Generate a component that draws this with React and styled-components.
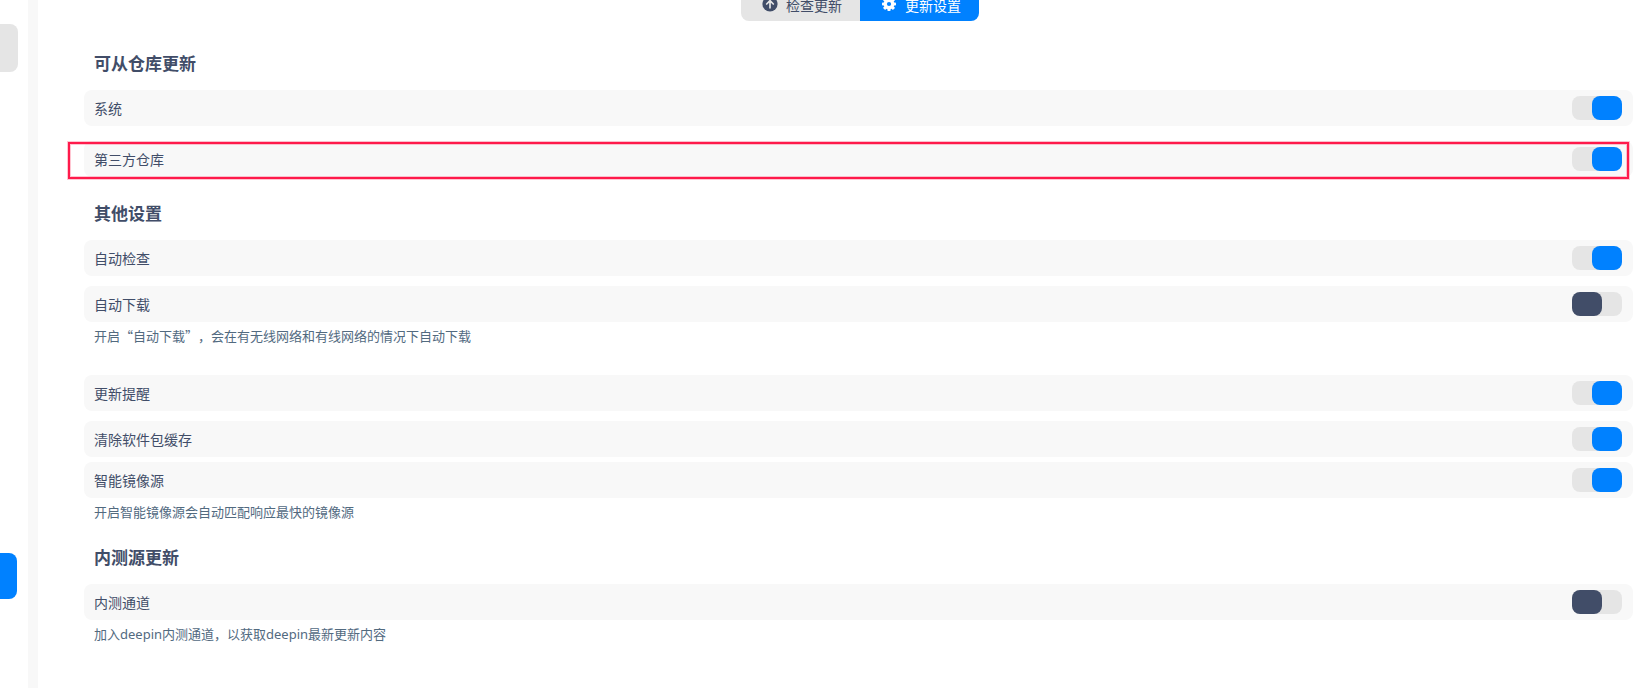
import React, { useState } from 'react';
import styled, { createGlobalStyle, css, ThemeProvider } from 'styled-components';

const theme = {
  primary: '#0081ff',
  dark: '#414d68',
  hint: '#526a7f',
  row: '#f8f8f8',
  grey: '#e5e5e5',
  mark: '#ff1a4b',
  markSoft: 'rgba(255, 26, 75, 0.25)',
  fontSize: {
    s: '13px',
    m: '14px',
    l: '17px',
  },
};

const GlobalStyle = createGlobalStyle`
  *, *::before, *::after {
    box-sizing: border-box;
  }

  body {
    margin: 0;
    background-color: white;
    font-family: 'Noto Sans CJK SC', 'Noto Sans', sans-serif;
    text-spacing-trim: space-all;
    overflow: hidden;
  }
`;

const StyledWrapper = styled.div`
  display: flex;
  min-height: 100vh;
  color: ${({ theme }) => theme.dark};
`;

const Sidebar = styled.nav`
  flex: 0 0 38px;
  display: flex;
  flex-direction: column;
  justify-content: space-between;
  align-items: flex-start;
  padding: 24px 0 89px;
  border-right: 10px solid ${({ theme }) => theme.row};
`;

const SidebarButton = styled.button`
  width: ${({ $active }) => ($active ? '17px' : '18px')};
  height: ${({ $active }) => ($active ? '46px' : '48px')};
  padding: 0;
  border: none;
  border-radius: 0 8px 8px 0;
  background-color: ${({ $active, theme }) => ($active ? theme.primary : theme.grey)};
`;

const Main = styled.main`
  flex: 1;
  min-width: 0;
  padding-left: 46px;
`;

/* the tab bar is scrolled partly out of the window */
const TabsWrapper = styled.div`
  display: flex;
  justify-content: center;
  margin: -15px 0 31px;
  padding-left: 3px;
`;

const Tabs = styled.div`
  display: flex;
  width: 238px;
  height: 36px;
  border-radius: 8px;
  overflow: hidden;
`;

const Tab = styled.button`
  flex: 1;
  display: flex;
  align-items: center;
  gap: 8px;
  padding: 4px 0 0 21px;
  border: none;
  font-family: inherit;
  font-size: ${({ theme }) => theme.fontSize.m};
  line-height: 20px;
  color: ${({ $active, theme }) => ($active ? 'white' : theme.dark)};
  background-color: ${({ $active, theme }) => ($active ? theme.primary : theme.grey)};
`;

const Icon = styled.svg`
  width: 16px;
  height: 16px;
  margin-bottom: 2px;
`;

const Section = styled.section`
  & + & {
    margin-top: 25px;
  }
`;

const Heading = styled.h2`
  margin: 0 0 16px;
  padding-left: 10px;
  font-size: ${({ theme }) => theme.fontSize.l};
  font-weight: 700;
  line-height: 22px;
`;

const Item = styled.div`
  position: relative;
  margin-top: ${({ $gap }) => $gap || 0}px;

  ${({ $marked }) =>
    $marked &&
    css`
      &::after {
        content: '';
        position: absolute;
        inset: 1px 4px -2px -16px;
        border: 2px solid ${({ theme }) => theme.mark};
        box-shadow: 0 0 0 1px ${({ theme }) => theme.markSoft},
          inset 0 0 0 1px ${({ theme }) => theme.markSoft};
        pointer-events: none;
      }
    `}
`;

const Row = styled.label`
  display: flex;
  justify-content: space-between;
  align-items: center;
  height: 36px;
  padding: 0 11px 0 10px;
  border-radius: 8px;
  font-size: ${({ theme }) => theme.fontSize.m};
  line-height: 20px;
  background-color: ${({ theme }) => theme.row};
`;

const Switch = styled.input`
  appearance: none;
  display: flex;
  width: 50px;
  height: 24px;
  margin: 0;
  border-radius: 8px;
  background-color: ${({ theme }) => theme.grey};

  &::before {
    content: '';
    width: 30px;
    height: 24px;
    border-radius: 8px;
    background-color: ${({ theme }) => theme.dark};
  }

  &:checked {
    justify-content: flex-end;
  }

  &:checked::before {
    background-color: ${({ theme }) => theme.primary};
  }
`;

const Hint = styled.p`
  margin: 5px 0 0;
  padding-left: 10px;
  font-family: ${({ $latin }) => $latin && "'Noto Sans', 'Noto Sans CJK SC', sans-serif"};
  font-size: ${({ theme }) => theme.fontSize.s};
  line-height: 18px;
  color: ${({ theme }) => theme.hint};
`;

const UpdateIcon = () => (
  <Icon viewBox="0 0 16 16" aria-hidden="true">
    <circle cx="8" cy="8" r="7.6" fill="#414d68" />
    <path
      d="M8 11.8V5M4.7 8 8 4.7 11.3 8"
      fill="none"
      stroke="#e5e5e5"
      strokeWidth="1.7"
      strokeLinecap="round"
      strokeLinejoin="round"
    />
  </Icon>
);

const SettingsIcon = () => (
  <Icon viewBox="0 0 16 16" aria-hidden="true">
    <g fill="white">
      {[0, 45, 90, 135].map(angle => (
        <rect
          key={angle}
          x="6.4"
          y="1"
          width="3.2"
          height="14"
          rx="0.8"
          transform={`rotate(${angle} 8 8)`}
        />
      ))}
      <circle cx="8" cy="8" r="5.3" />
    </g>
    <circle cx="8" cy="8" r="2.1" fill="#0081ff" />
  </Icon>
);

const sections = [
  {
    title: '可从仓库更新',
    items: [
      { label: '系统', on: true },
      { label: '第三方仓库', on: true, gap: 15, marked: true },
    ],
  },
  {
    title: '其他设置',
    items: [
      { label: '自动检查', on: true },
      {
        label: '自动下载',
        on: false,
        gap: 10,
        hint: '开启“自动下载”，会在有无线网络和有线网络的情况下自动下载',
      },
      { label: '更新提醒', on: true, gap: 30 },
      { label: '清除软件包缓存', on: true, gap: 10 },
      { label: '智能镜像源', on: true, gap: 5, hint: '开启智能镜像源会自动匹配响应最快的镜像源' },
    ],
  },
  {
    title: '内测源更新',
    items: [
      {
        label: '内测通道',
        on: false,
        hint: '加入deepin内测通道，以获取deepin最新更新内容',
        latin: true,
      },
    ],
  },
];

const Setting = ({ label, on, gap, marked, hint, latin }) => {
  const [checked, setChecked] = useState(on);

  return (
    <Item $gap={gap} $marked={marked}>
      <Row>
        {label}
        <Switch
          type="checkbox"
          role="switch"
          checked={checked}
          onChange={e => setChecked(e.target.checked)}
        />
      </Row>
      {hint && <Hint $latin={latin}>{hint}</Hint>}
    </Item>
  );
};

const App = () => (
  <ThemeProvider theme={theme}>
    <GlobalStyle />
    <StyledWrapper>
      <Sidebar>
        <SidebarButton type="button" aria-label="模块" />
        <SidebarButton type="button" aria-label="更新" $active />
      </Sidebar>
      <Main>
        <TabsWrapper>
          <Tabs>
            <Tab type="button">
              <UpdateIcon />
              检查更新
            </Tab>
            <Tab type="button" $active>
              <SettingsIcon />
              更新设置
            </Tab>
          </Tabs>
        </TabsWrapper>
        {sections.map(({ title, items }) => (
          <Section key={title}>
            <Heading>{title}</Heading>
            {items.map(item => (
              <Setting key={item.label} {...item} />
            ))}
          </Section>
        ))}
      </Main>
    </StyledWrapper>
  </ThemeProvider>
);

export default App;
